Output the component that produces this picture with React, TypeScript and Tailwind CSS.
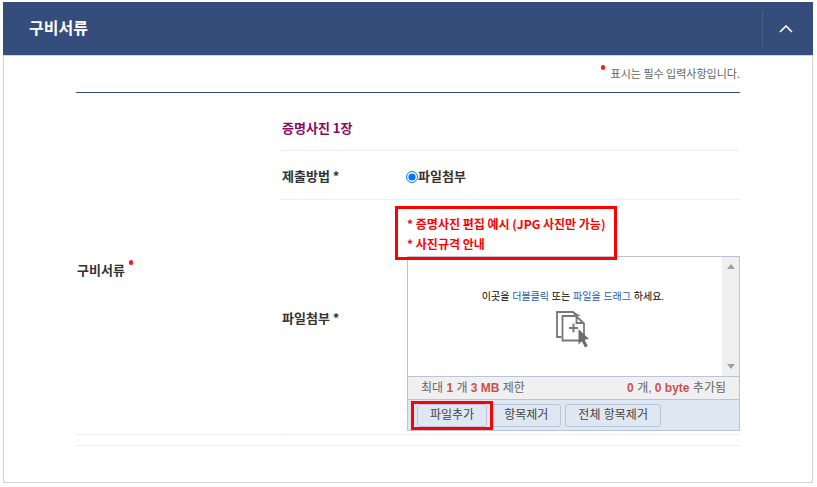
import { useState, type ReactNode } from 'react';

const GUIDE_LINKS = ['* 증명사진 편집 예시 (JPG 사진만 가능)', '* 사진규격 안내'];

function RequiredDot() {
  return <span aria-hidden="true" className="h-[5px] w-1 shrink-0 rounded-full bg-[#ff1414]" />;
}

function Chevron({ open }: { open: boolean }) {
  return (
    <svg
      width="14"
      height="8"
      viewBox="0 0 14 8"
      fill="none"
      stroke="white"
      strokeWidth="1.6"
      aria-hidden="true"
      className={open ? '' : 'rotate-180'}
    >
      <path d="M1 7 7 1l6 6" />
    </svg>
  );
}

function DropFilesIcon() {
  return (
    <svg width="34" height="37" viewBox="0 0 34 37" fill="none" stroke="#77787b" strokeWidth="1.8" aria-hidden="true">
      <path d="M5.5 26H1V1h16l3.5 3.5" />
      <path d="M16 1l5 4h4l-7-4z" fill="#77787b" stroke="none" />
      <path d="M6.5 5H20l8 7.5v17H6.500z" fill="white" />
      <path d="M20.500 5.500V12H27.500" />
      <path d="M17.500 12.500v9M13 17h9" strokeWidth="2" />
      <path d="M22.500 18v15.500l3.300-3.300 3.200 6.300 2.800-1.400-3.200-6.300 4.400-.8z" fill="#6b6c70" stroke="none" />
    </svg>
  );
}

function ScrollTrack() {
  return (
    <div aria-hidden="true" className="flex w-[17px] flex-col items-center justify-between bg-[#f0f0f0] py-[7px]">
      <svg width="8" height="5" viewBox="0 0 8 5" fill="#a0a0a0">
        <path d="M4 0 8 5H0z" />
      </svg>
      <svg width="8" height="5" viewBox="0 0 8 5" fill="#a0a0a0">
        <path d="M4 5 8 0H0z" />
      </svg>
    </div>
  );
}

function BarButton({ children }: { children: ReactNode }) {
  return (
    <button
      type="button"
      className="h-[23px] rounded-[3px] border border-[#b9c5d8] px-3 text-xs leading-none text-[#444] hover:bg-[#eef3fa]"
    >
      {children}
    </button>
  );
}

function Uploader() {
  return (
    <div className="-mr-px border border-[#b9c3d9] font-['Liberation_Sans','Noto_Sans_CJK_KR',sans-serif]">
      <div className="flex h-[119px]">
        <div className="flex flex-1 flex-col items-center pt-8 pl-4">
          <p className="text-[10px] leading-4 text-black">
            이곳을 <span className="text-[#1d5aab]">더블클릭</span> 또는{' '}
            <span className="text-[#1d5aab]">파일을 드래그</span> 하세요.
          </p>
          <div className="mt-1.5">
            <DropFilesIcon />
          </div>
        </div>
        <ScrollTrack />
      </div>
      <div className="flex h-6 items-center justify-between border-y border-[#b9c3d9] bg-[#f0f0f0] px-[13px] text-xs text-[#666]">
        <span>
          최대 <b className="text-[#c9504f]">1</b> 개 <b className="text-[#c9504f]">3 MB</b> 제한
        </span>
        <span>
          <b className="text-[#c9504f]">0</b> 개, <b className="text-[#c9504f]">0 byte</b> 추가됨
        </span>
      </div>
      <div className="flex h-[30px] items-center gap-1 bg-[#dfe7f3] px-[9px]">
        <div className="relative flex">
          <BarButton>파일추가</BarButton>
          <span aria-hidden="true" className="pointer-events-none absolute -inset-x-1.5 -inset-y-[3px] border-3 border-[#ff0000]" />
        </div>
        <BarButton>항목제거</BarButton>
        <BarButton>전체 항목제거</BarButton>
      </div>
    </div>
  );
}

export default function App() {
  const [open, setOpen] = useState(true);

  return (
    <section className="mt-0.5 mr-1 mb-1 ml-[3px] bg-white font-['Noto_Sans_CJK_KR',sans-serif] text-[13px] text-[#333]">
      <header className="flex h-[53px] items-center justify-between bg-[#344d7a] pl-[26px]">
        <h2 className="pb-1 text-base font-bold text-white">구비서류</h2>
        <button
          type="button"
          aria-label="구비서류 접기"
          aria-expanded={open}
          onClick={() => setOpen(!open)}
          className="flex h-9 w-[51px] items-center justify-center border-l border-[#48608c] pr-1"
        >
          <Chevron open={open} />
        </button>
      </header>

      {open ? (
        <div className="border border-[#d3d3d3] px-18 pb-9">
          <div className="flex h-9 items-center justify-end gap-1.5 pb-0.5 text-[11px] text-[#666]">
            <span className="-mt-3 flex">
              <RequiredDot />
            </span>
            표시는 필수 입력사항입니다.
          </div>

          <div className="border-t border-b border-t-[#344d7a] border-b-[#eee] pt-3 pb-[9px]">
            <table className="w-full table-fixed border-separate border-spacing-px text-left">
              <colgroup>
                <col className="w-[203px]" />
                <col className="w-[124px]" />
                <col />
              </colgroup>
              <tbody>
                <tr className="h-[45px]">
                  <th rowSpan={3} scope="rowgroup" className="border-b border-[#eee] font-bold">
                    <span className="flex items-center gap-1">
                      구비서류
                      <span className="-mt-4 flex">
                        <RequiredDot />
                      </span>
                    </span>
                  </th>
                  <th colSpan={2} scope="colgroup" className="border-b border-[#eee] px-px font-bold text-[#8b0a62]">
                    증명사진 1장
                  </th>
                </tr>
                <tr className="h-12">
                  <th scope="row" className="border-b border-[#eee] px-px font-bold">
                    제출방법 *
                  </th>
                  <td className="border-b border-[#eee] font-bold">
                    <label className="flex items-center">
                      <input type="radio" name="submitMethod" defaultChecked className="mt-0.5 size-3 accent-[#0075ff]" />
                      파일첨부
                    </label>
                  </td>
                </tr>
                <tr>
                  <th scope="row" className="border-b border-[#eee] px-px font-bold">
                    파일첨부 *
                  </th>
                  <td className="border-b border-[#eee] pt-[13px] pb-[3px] pl-px align-top">
                    <div className="relative mb-0.5 w-fit text-xs leading-5 font-bold text-[#ff0000]">
                      {GUIDE_LINKS.map((label) => (
                        <a key={label} href="#guide" className="block">
                          {label}
                        </a>
                      ))}
                      <span
                        aria-hidden="true"
                        className="pointer-events-none absolute -inset-x-3 -top-2 -bottom-1.5 border-3 border-[#ff0000]"
                      />
                    </div>
                    <Uploader />
                  </td>
                </tr>
              </tbody>
            </table>
          </div>
        </div>
      ) : null}
    </section>
  );
}
